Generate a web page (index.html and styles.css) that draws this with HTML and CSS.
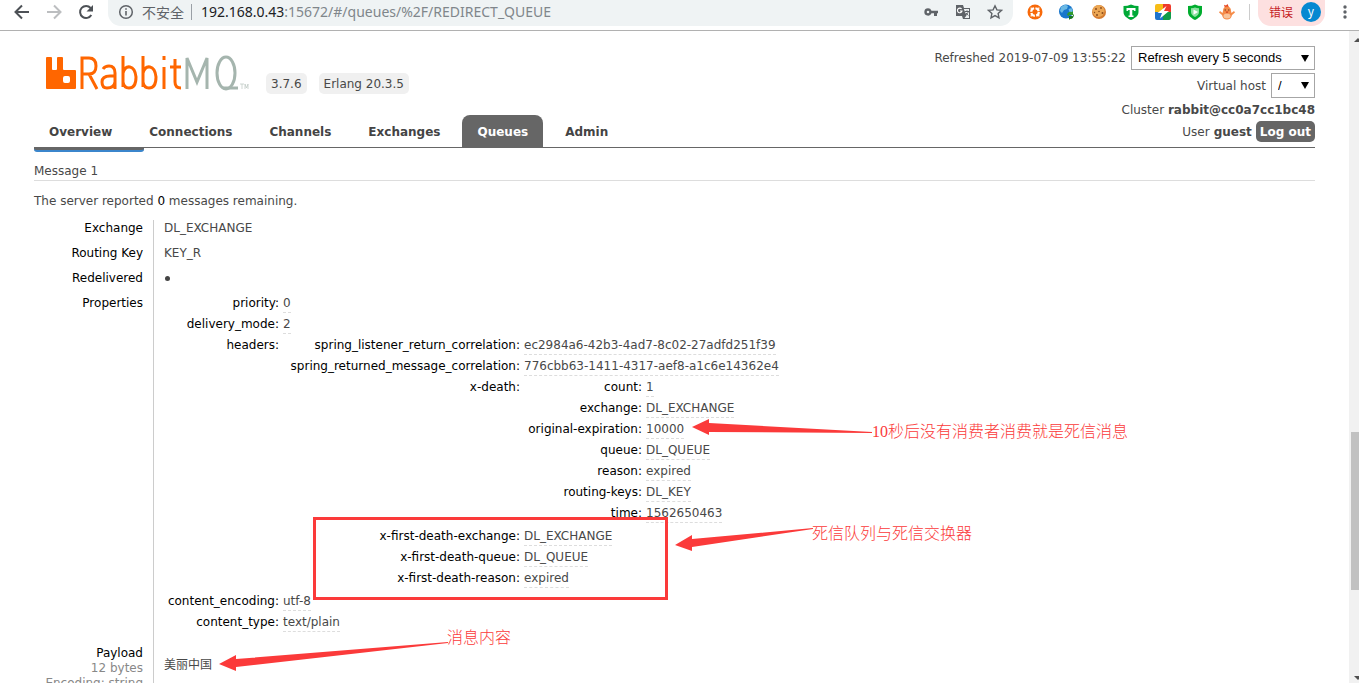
FILE: index.html
```html
<!DOCTYPE html>
<html lang="zh-CN">
<head>
<meta charset="utf-8">
<title>RabbitMQ Management</title>
<link rel="stylesheet" href="styles.css">
</head>
<body>
<div class="browser">
  <button class="tool" aria-label="Back"><svg width="16" height="16" viewBox="0 0 16 16"><path d="M15 8H2M8 1.500L1.500 8L8 14.500" fill="none" stroke="#4d5156" stroke-width="2"/></svg></button>
  <button class="tool" aria-label="Forward"><svg width="16" height="16" viewBox="0 0 16 16"><path d="M1 8h13M8 1.500L14.500 8L8 14.500" fill="none" stroke="#bcbec0" stroke-width="2"/></svg></button>
  <button class="tool" aria-label="Reload"><svg width="16" height="16" viewBox="0 0 16 16"><path d="M13.300 11A6 6 0 1 1 12.600 4" fill="none" stroke="#4d5156" stroke-width="2"/><path d="M15 1v6.500H8.500z" fill="#4d5156"/></svg></button>
  <div class="address">
    <svg width="16" height="16" viewBox="0 0 16 16"><circle cx="8" cy="8" r="6.300" fill="none" stroke="#5f6368" stroke-width="1.500"/><path d="M8 7v4.500M8 4.200v1.600" stroke="#5f6368" stroke-width="1.600"/></svg>
    <span class="insecure">不安全</span>
    <span class="url"><b>192.168.0.43</b>:15672/#/queues/%2F/REDIRECT_QUEUE</span>
    <span class="address-icons">
      <svg width="16" height="16" viewBox="0 0 16 16"><path fill-rule="evenodd" fill="#5f6368" d="M5 4.300a3.700 3.700 0 1 0 3.500 5H11V12h3V9.300h1V6.700H8.500A3.700 3.700 0 0 0 5 4.300zM5 6.700a1.300 1.300 0 1 1 0 2.600a1.300 1.300 0 0 1 0-2.600z"/></svg>
      <svg width="16" height="16" viewBox="0 0 16 16"><path d="M1 1h7l1 3h6v11H8l-1-3H1z" fill="#5f6368"/><path d="M8.800 5h5.200v9H9.500l2-2.500z" fill="#eef2f3"/><path d="M6.600 5A2.300 2.300 0 1 0 7 7H5" fill="none" stroke="#fff" stroke-width="1.100"/><path d="M10 7.500h4M12 6.300v1.200M10.500 11c1.500-.6 2.500-2 2.600-3.300M11 9l2.300 2.500" fill="none" stroke="#5f6368"/></svg>
      <svg width="16" height="16" viewBox="0 0 16 16"><path d="M8 1.800l1.900 4.100 4.500.5-3.300 3 .9 4.400L8 11.600l-4 2.200.9-4.400-3.300-3 4.500-.5z" fill="none" stroke="#5f6368" stroke-width="1.400"/></svg>
    </span>
  </div>
  <div class="extensions">
    <svg width="16" height="16" viewBox="0 0 16 16"><circle cx="8" cy="8" r="7.500" fill="#f8690a"/><circle cx="8" cy="8" r="3.800" fill="none" stroke="#fff" stroke-width="2.200" stroke-dasharray="4.600 1.370"/><path d="M3.500 3.500l2 .3-1.700 2zM12.500 3.500l-.3 2-2-1.700zM12.500 12.500l-2-.3 1.700-2zM3.500 12.500l.3-2 2 1.700z" fill="#fff"/></svg>
    <svg width="16" height="16" viewBox="0 0 16 16"><circle cx="7" cy="7.500" r="7" fill="#1976cc"/><path d="M2 3l4-2.500 3 1.500-1 3-3 1-2 3-2-2zM9.500 5l3-1 1.500 4-3 1z" fill="#6bb9e4"/><path d="M8 11q1-4 5-3l1-1v4h-4l1-1q-1 0-1 2z" fill="#2f9a2d"/><path d="M15 10q0 5-4 5l-1 1v-4h4l-1 1q1 0 1-2z" fill="#17771e"/></svg>
    <svg width="16" height="16" viewBox="0 0 16 16"><circle cx="8" cy="8" r="7" fill="#d57c30"/><circle cx="7.500" cy="7" r="6" fill="#eba653"/><g fill="#8a4a1c"><circle cx="5" cy="5" r="1"/><circle cx="10" cy="4" r=".9"/><circle cx="11.500" cy="9" r="1"/><circle cx="6" cy="11" r="1"/><circle cx="8" cy="7.500" r=".8"/><circle cx="3.500" cy="8.500" r=".7"/></g></svg>
    <svg width="16" height="16" viewBox="0 0 16 16"><path d="M.5 2q4 0 7.500-1.500Q11.500 2 15.500 2v6c0 4-4 6.500-7.500 8C4.500 14.500.5 12 .5 8z" fill="#00a937"/><path d="M3.500 4h9v3h-1.200l-.8-1H9.300v5.500h1.200V13h-5v-1.500h1.200V6H5.500l-.8 1H3.500z" fill="#fff"/></svg>
    <svg width="16" height="16" viewBox="0 0 16 16"><path d="M0 2q0-2 2-2h6v8H0z" fill="#f7bd16"/><path d="M8 0h6q2 0 2 2v6H8z" fill="#ee3a2b"/><path d="M0 8h8v8H2q-2 0-2-2z" fill="#1e74cd"/><path d="M8 8h8v6q0 2-2 2H8z" fill="#109c4a"/><path d="M11.500 2L2.500 9H7l-2 5.500L14 7H9z" fill="#fff"/></svg>
    <svg width="16" height="16" viewBox="0 0 16 16"><path d="M1 2q4 0 7-1.500Q11 2 15 2v6c0 4-4 6.500-7 8C5 14.500 1 12 1 8z" fill="#00ad2e"/><path d="M4 4.200q2.500 0 4-.7 1.500.7 4 .7V8q0 3-4 5-4-2-4-5z" fill="#8ce0a0"/><path d="M6.500 5.500v5.300L11 8z" fill="#fff"/></svg>
    <svg width="16" height="16" viewBox="0 0 16 16"><path d="M6 4L5 .8l2 .8L8.500 0 10 3.500z" fill="#e6421c"/><path d="M4 7q0-4.500 4-4.500T12 7l.5 2L15 7l1 1.500-3 2.500q-1 4.500-5 4.500T3 11L0 8.500 1 7l2.500 2z" fill="#f58b48"/><ellipse cx="8" cy="12" rx="3.500" ry="2.500" fill="#f9c49a"/><path d="M6.200 5.500v1M9.800 5.500v1" stroke="#35211b"/><path d="M6.500 7.500h3L8 9.500z" fill="#d2431c"/></svg>
  </div>
  <span class="divider"></span>
  <button class="profile">错误<span class="avatar">y</span></button>
  <button class="menu" aria-label="Menu"><svg width="4" height="16" viewBox="0 0 4 16" fill="#5f6368"><circle cx="2" cy="3" r="1.700"/><circle cx="2" cy="8" r="1.700"/><circle cx="2" cy="13" r="1.700"/></svg></button>
</div>
<div class="viewport">
<div class="page">
  <header class="header">
    <div class="brand">
      <svg class="logo" width="206" height="38" viewBox="0 0 206 38" role="img" aria-label="RabbitMQ">
        <path fill="#ff6600" fill-rule="evenodd" d="M2 2h4q1 0 1 1v11q0 1 1 1h3q1 0 1-1V3q0-1 1-1h4q1 0 1 1v11q0 1 1 1h11q1 0 1 1v17q0 1-1 1H2q-1 0-1-1V3q0-1 1-1zM20 21q-2 0-2 2v3q0 2 2 2h3q2 0 2-2v-3q0-2-2-2z"/>
        <g fill="none" stroke="#ff6600" stroke-width="3"><path d="M37 34V3h7q7 0 7 8t-7 8h-7M44 19l8 15M58 14q2-3 6-3 6 0 6 7v16M70 21h-5q-8 0-8 6t5 6q7 0 8-6M78 1v31M78 18q2-7 7-6t6 10q0 11-7 11-5 0-6-6M98 1v31M98 18q2-7 7-6t6 10q0 11-7 11-5 0-6-6M119 12v22M119 1v4M130 4v23q0 6 6 6M125 12h11"/></g>
        <g fill="none" stroke="#a5b5ae" stroke-width="3"><path d="M142 34V3l10 24L162 3v31"/><ellipse cx="181" cy="18" rx="9" ry="16"/><path d="M178 33h15"/></g>
        <path d="M195 29h4M197 29v5M200 34v-5l1.500 4 1.500-4v5" fill="none" stroke="#bac5c0" stroke-width=".7"/>
      </svg>
      <span class="badge">3.7.6</span><span class="badge">Erlang 20.3.5</span>
    </div>
    <div class="status">
      <label>Refreshed 2019-07-09 13:55:22 <span class="pick"><select><option>Refresh every 5 seconds</option></select></span></label>
      <label class="host">Virtual host <span class="pick"><select class="short"><option>/</option></select></span></label>
      <div class="cluster">Cluster <b>rabbit@cc0a7cc1bc48</b></div>
      <div class="user">User <b>guest</b> <button class="logout">Log out</button></div>
    </div>
  </header>
  <nav class="tabs"><a href="#/">Overview</a><a href="#/connections">Connections</a><a href="#/channels">Channels</a><a href="#/exchanges">Exchanges</a><a class="selected" href="#/queues">Queues</a><a href="#/users">Admin</a></nav>
  <main>
    <button class="get-messages" aria-label="Get messages"></button>
    <h2>Message 1</h2>
    <p class="report">The server reported <b>0</b> messages remaining.</p>
    <table class="facts">
      <tr><th>Exchange</th><td>DL_EXCHANGE</td></tr>
      <tr><th>Routing Key</th><td>KEY_R</td></tr>
      <tr><th>Redelivered</th><td><span class="dot"></span></td></tr>
      <tr class="properties"><th>Properties</th><td>
        <table class="mini">
          <tr><th>priority:</th><td><abbr>0</abbr></td></tr>
          <tr><th>delivery_mode:</th><td><abbr>2</abbr></td></tr>
          <tr><th>headers:</th><td>
            <table class="mini nested">
              <tr><th>spring_listener_return_correlation:</th><td><abbr>ec2984a6-42b3-4ad7-8c02-27adfd251f39</abbr></td></tr>
              <tr><th>spring_returned_message_correlation:</th><td><abbr>776cbb63-1411-4317-aef8-a1c6e14362e4</abbr></td></tr>
              <tr><th>x-death:</th><td>
                <table class="mini inner">
                  <tr><th>count:</th><td><abbr>1</abbr></td></tr>
                  <tr><th>exchange:</th><td><abbr>DL_EXCHANGE</abbr></td></tr>
                  <tr><th>original-expiration:</th><td><abbr>10000</abbr></td></tr>
                  <tr><th>queue:</th><td><abbr>DL_QUEUE</abbr></td></tr>
                  <tr><th>reason:</th><td><abbr>expired</abbr></td></tr>
                  <tr><th>routing-keys:</th><td><abbr>DL_KEY</abbr></td></tr>
                  <tr><th>time:</th><td><abbr>1562650463</abbr></td></tr>
                </table></td></tr>
              <tr><th>x-first-death-exchange:</th><td><abbr>DL_EXCHANGE</abbr></td></tr>
              <tr><th>x-first-death-queue:</th><td><abbr>DL_QUEUE</abbr></td></tr>
              <tr><th>x-first-death-reason:</th><td><abbr>expired</abbr></td></tr>
            </table></td></tr>
          <tr><th>content_encoding:</th><td><abbr>utf-8</abbr></td></tr>
          <tr><th>content_type:</th><td><abbr>text/plain</abbr></td></tr>
        </table></td></tr>
      <tr class="payload"><th>Payload<small>12 bytes</small><small>Encoding: string</small></th><td>美丽中国</td></tr>
    </table>
  </main>
</div>
<div class="scrollbar"><i class="arrow up"></i><i class="thumb"></i><i class="arrow down"></i></div>
</div>
<div class="marks">
  <div class="frame"></div>
  <svg class="arrows" width="1140" height="683" viewBox="0 0 1140 683" fill="#fb3a3a"><path d="M692 427l17-8v4l163 9v1l-163-1v3z"/><path d="M675 545l17-10v4l121-11v1l-121 18v4z"/><path d="M219 664l17-9v4l212-17v1l-212 24v4z"/></svg>
  <span class="note expiry">10秒后没有消费者消费就是死信消息</span>
  <span class="note dead">死信队列与死信交换器</span>
  <span class="note content">消息内容</span>
</div>
</body>
</html>
```
FILE: styles.css
```css
* { box-sizing: border-box; }
body { margin: 0; height: 100vh; overflow: hidden; display: flex; flex-direction: column; position: relative; background: #fff; color: #484848; font: 12px/16px "DejaVu Sans", "Noto Sans CJK SC", sans-serif; }
button { font: inherit; border: 0; padding: 0; background: none; }
svg { display: block; flex: none; }
.browser { flex: none; height: 31px; border-bottom: 1px solid #b1b1b1; display: flex; align-items: flex-start; padding: 0 12px 0 14px; }
.tool { width: 16px; margin: 4px 16px 0 0; }
.address { flex: 1; height: 26px; margin-left: -2px; padding: 0 10px 2px; border-radius: 0 0 13px 13px; background: #eff3f4; display: flex; align-items: center; font: 14px/24px "Noto Sans CJK SC", sans-serif; color: #5f6368; }
.insecure { margin-left: 8px; padding-right: 7px; border-right: 1px solid #9aa0a6; line-height: 16px; }
.url { margin-left: 9px; font: 14px/20px "Noto Sans", sans-serif; color: #80868b; white-space: nowrap; }
.url b { font-weight: 400; color: #202124; }
.address-icons { margin-left: auto; display: flex; gap: 16px; }
.extensions { display: flex; gap: 16px; margin: 4px 14px 0 14px; }
.divider { width: 1px; height: 16px; margin: 4px 8px 0 0; background: #ccc; }
.profile { height: 26px; padding: 0 4px 2px 11px; margin-right: 18px; background: #fde0e0; color: #c5221f; border-radius: 0 0 13px 13px; display: flex; align-items: center; gap: 8px; font: 12px/16px "Noto Sans CJK SC", sans-serif; }
.avatar { width: 20px; height: 20px; border-radius: 50%; background: #0588d1; color: #fff; line-height: 18px; }
.menu { margin-top: 4px; }
.viewport { flex: 1; min-height: 0; display: flex; }
.page { flex: 1; min-width: 0; overflow: hidden; padding: 14px 34px 0; }
.header { display: flex; justify-content: space-between; height: 70px; }
.brand { display: flex; align-items: flex-start; padding: 10px 0 0 11px; }
.badge { margin: 18px 0 0 15px; padding: 3px 5px 2px; border-radius: 5px; background: #f0f0f0; }
.badge + .badge { margin-left: 12px; }
.status { display: flex; flex-direction: column; align-items: flex-end; }
.status label { height: 24px; display: flex; align-items: center; gap: 5px; padding-top: 1px; }
.status .host { margin-top: 4px; }
.pick { position: relative; }
.pick::after { content: ""; position: absolute; right: 6px; top: 9px; border: 4px solid transparent; border-top: 7px solid #000; border-bottom: 0; }
select { display: block; appearance: none; width: 184px; height: 24px; padding: 0 6px; border: 1px solid #a6a6a6; border-radius: 0; background: #fff; color: #000; font: 13px/16px "Liberation Sans", sans-serif; }
.short { width: 44px; height: 25px; }
.cluster { margin-top: 5px; }
.user { display: flex; align-items: center; gap: 4px; margin-top: 3px; }
.logout { height: 21px; padding: 0 4px; border-radius: 5px; background: #666; color: #fff; font-weight: 700; }
.tabs { display: flex; height: 33px; border-bottom: 1px solid #666; }
.tabs a { padding: 9px 15px 7px; margin-right: 7px; border-radius: 8px 8px 0 0; color: #444; font-weight: 700; text-decoration: none; }
.tabs .selected { background: #666; color: #fff; }
.get-messages { display: block; width: 110px; height: 4px; background: #666; border-bottom: 2px solid #3b86cc; border-radius: 0 0 3px 3px; }
h2 { margin: 11px 0 0; padding-bottom: 1px; border-bottom: 1px solid #ddd; font: inherit; }
.report { margin: 12px 0 11px; }
.report b { color: #000; font-weight: 400; }
table { border-collapse: separate; border-spacing: 0; }
th { padding: 0; font-weight: 400; color: #000; text-align: right; vertical-align: top; white-space: nowrap; }
td { padding: 0; vertical-align: top; text-align: left; white-space: nowrap; }
.facts > tbody > tr > th { min-width: 120px; padding: 0 10px 9px 0; border-right: 1px solid #ccc; }
.facts > tbody > tr > td { padding: 0 0 9px 10px; }
.mini th { min-width: 119px; padding: 0 4px 5px 0; }
.mini td { padding: 0; }
.nested th { min-width: 241px; }
.inner th { min-width: 122px; }
.mini abbr { display: block; width: fit-content; height: 18px; border-bottom: 1px dashed #ddd; }
.mini td:has(> .mini) { padding-bottom: 2px; }
.dot { display: block; width: 5px; height: 5px; margin: 6px 0 0 1px; border-radius: 50%; background: #444; }
.facts > tbody > .payload > th { padding-top: 1px; }
.facts > tbody > .payload > td { padding-top: 13px; }
small { display: block; font-size: 12px; line-height: 15px; color: #888; }
.scrollbar { flex: none; width: 10px; background: #f1f1f1; position: relative; overflow: hidden; }
.thumb { position: absolute; left: 2px; right: 0; top: 401px; height: 158px; background: #c1c1c1; }
.arrow { position: absolute; left: 5px; border: 4px solid transparent; }
.up { top: 3px; border-bottom-color: #505050; }
.down { bottom: -1px; border-top-color: #505050; }
.marks { position: absolute; left: 0; top: 0; color: #fb3a3a; pointer-events: none; }
.frame { position: absolute; left: 313px; top: 517px; width: 355px; height: 83px; border: 3px solid #fb3a3a; }
.note { position: absolute; font: 16px/20px "Liberation Serif", "Noto Sans CJK SC", serif; font-weight: 300; white-space: nowrap; }
.expiry { left: 872px; top: 422px; }
.dead { left: 812px; top: 524px; }
.content { left: 447px; top: 628px; }
```
